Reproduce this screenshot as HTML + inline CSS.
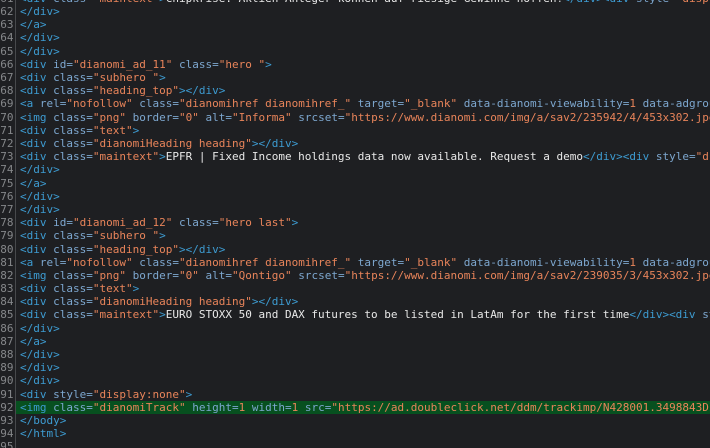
<!DOCTYPE html>
<html lang="en">
<head>
<meta charset="utf-8">
<title>Source view</title>
<style>
html,body{margin:0;padding:0;background:#1e1f22;width:710px;height:448px;overflow:hidden}
#w{position:relative;width:710px;height:448px;overflow:hidden;background:#1e1f22;font:11px/13.19px "DejaVu Sans Mono",monospace;filter:blur(.3px)}
#sep{position:absolute;left:15px;top:0;width:1px;height:448px;background:#47494c}
#hl{position:absolute;left:16px;right:-2px;top:401px;height:13px;background:#07501f}
.l{position:absolute;left:0;height:13.19px;width:710px;white-space:pre}
.g{position:absolute;right:696.5px;top:0;color:#85878a}
.c{position:absolute;left:20px;top:0}
i{font-style:normal}
.t{color:#3d9bd1}.a{color:#7da7cf}.s{color:#e8845a}.n{color:#e8845a}.x{color:#e8e8e8}
</style>
</head>
<body>
<div id="w">
<div id="sep"></div>
<div id="hl"></div>
<div class="l" style="top:-8.2px"><span class="g">61</span><span class="c"><i class="t">&lt;div</i> <i class="a">class=</i><i class="s">"maintext"</i><i class="t">&gt;</i><i class="x">Chipkrise: Aktien-Anleger können auf riesige Gewinne hoffen!</i><i class="t">&lt;/div&gt;&lt;div</i> <i class="a">style=</i><i class="s">"display</i></span></div>
<div class="l" style="top:5px"><span class="g">62</span><span class="c t">&lt;/div&gt;</span></div>
<div class="l" style="top:18.2px"><span class="g">63</span><span class="c t">&lt;/a&gt;</span></div>
<div class="l" style="top:31.4px"><span class="g">64</span><span class="c t">&lt;/div&gt;</span></div>
<div class="l" style="top:44.6px"><span class="g">65</span><span class="c t">&lt;/div&gt;</span></div>
<div class="l" style="top:57.8px"><span class="g">66</span><span class="c"><i class="t">&lt;div</i> <i class="a">id=</i><i class="s">"dianomi_ad_11"</i> <i class="a">class=</i><i class="s">"hero "</i><i class="t">&gt;</i></span></div>
<div class="l" style="top:71px"><span class="g">67</span><span class="c"><i class="t">&lt;div</i> <i class="a">class=</i><i class="s">"subhero "</i><i class="t">&gt;</i></span></div>
<div class="l" style="top:84.1px"><span class="g">68</span><span class="c"><i class="t">&lt;div</i> <i class="a">class=</i><i class="s">"heading_top"</i><i class="t">&gt;&lt;/div&gt;</i></span></div>
<div class="l" style="top:97.3px"><span class="g">69</span><span class="c"><i class="t">&lt;a</i> <i class="a">rel=</i><i class="s">"nofollow"</i> <i class="a">class=</i><i class="s">"dianomihref dianomihref_"</i> <i class="a">target=</i><i class="s">"_blank"</i> <i class="a">data-dianomi-viewability=</i><i class="n">1</i> <i class="a">data-adgroup</i></span></div>
<div class="l" style="top:110.5px"><span class="g">70</span><span class="c"><i class="t">&lt;img</i> <i class="a">class=</i><i class="s">"png"</i> <i class="a">border=</i><i class="s">"0"</i> <i class="a">alt=</i><i class="s">"Informa"</i> <i class="a">srcset=</i><i class="s">"https://www.dianomi.com/img/a/sav2/235942/4/453x302.jpg</i></span></div>
<div class="l" style="top:123.7px"><span class="g">71</span><span class="c"><i class="t">&lt;div</i> <i class="a">class=</i><i class="s">"text"</i><i class="t">&gt;</i></span></div>
<div class="l" style="top:136.9px"><span class="g">72</span><span class="c"><i class="t">&lt;div</i> <i class="a">class=</i><i class="s">"dianomiHeading heading"</i><i class="t">&gt;&lt;/div&gt;</i></span></div>
<div class="l" style="top:150.1px"><span class="g">73</span><span class="c"><i class="t">&lt;div</i> <i class="a">class=</i><i class="s">"maintext"</i><i class="t">&gt;</i><i class="x">EPFR | Fixed Income holdings data now available. Request a demo</i><i class="t">&lt;/div&gt;&lt;div</i> <i class="a">style=</i><i class="s">"d</i></span></div>
<div class="l" style="top:163.3px"><span class="g">74</span><span class="c t">&lt;/div&gt;</span></div>
<div class="l" style="top:176.5px"><span class="g">75</span><span class="c t">&lt;/a&gt;</span></div>
<div class="l" style="top:189.7px"><span class="g">76</span><span class="c t">&lt;/div&gt;</span></div>
<div class="l" style="top:202.9px"><span class="g">77</span><span class="c t">&lt;/div&gt;</span></div>
<div class="l" style="top:216.1px"><span class="g">78</span><span class="c"><i class="t">&lt;div</i> <i class="a">id=</i><i class="s">"dianomi_ad_12"</i> <i class="a">class=</i><i class="s">"hero last"</i><i class="t">&gt;</i></span></div>
<div class="l" style="top:229.3px"><span class="g">79</span><span class="c"><i class="t">&lt;div</i> <i class="a">class=</i><i class="s">"subhero "</i><i class="t">&gt;</i></span></div>
<div class="l" style="top:242.5px"><span class="g">80</span><span class="c"><i class="t">&lt;div</i> <i class="a">class=</i><i class="s">"heading_top"</i><i class="t">&gt;&lt;/div&gt;</i></span></div>
<div class="l" style="top:255.7px"><span class="g">81</span><span class="c"><i class="t">&lt;a</i> <i class="a">rel=</i><i class="s">"nofollow"</i> <i class="a">class=</i><i class="s">"dianomihref dianomihref_"</i> <i class="a">target=</i><i class="s">"_blank"</i> <i class="a">data-dianomi-viewability=</i><i class="n">1</i> <i class="a">data-adgroup</i></span></div>
<div class="l" style="top:268.9px"><span class="g">82</span><span class="c"><i class="t">&lt;img</i> <i class="a">class=</i><i class="s">"png"</i> <i class="a">border=</i><i class="s">"0"</i> <i class="a">alt=</i><i class="s">"Qontigo"</i> <i class="a">srcset=</i><i class="s">"https://www.dianomi.com/img/a/sav2/239035/3/453x302.jpg</i></span></div>
<div class="l" style="top:282px"><span class="g">83</span><span class="c"><i class="t">&lt;div</i> <i class="a">class=</i><i class="s">"text"</i><i class="t">&gt;</i></span></div>
<div class="l" style="top:295.2px"><span class="g">84</span><span class="c"><i class="t">&lt;div</i> <i class="a">class=</i><i class="s">"dianomiHeading heading"</i><i class="t">&gt;&lt;/div&gt;</i></span></div>
<div class="l" style="top:308.4px"><span class="g">85</span><span class="c"><i class="t">&lt;div</i> <i class="a">class=</i><i class="s">"maintext"</i><i class="t">&gt;</i><i class="x">EURO STOXX 50 and DAX futures to be listed in LatAm for the first time</i><i class="t">&lt;/div&gt;&lt;div</i> <i class="a">st</i></span></div>
<div class="l" style="top:321.6px"><span class="g">86</span><span class="c t">&lt;/div&gt;</span></div>
<div class="l" style="top:334.8px"><span class="g">87</span><span class="c t">&lt;/a&gt;</span></div>
<div class="l" style="top:348px"><span class="g">88</span><span class="c t">&lt;/div&gt;</span></div>
<div class="l" style="top:361.2px"><span class="g">89</span><span class="c t">&lt;/div&gt;</span></div>
<div class="l" style="top:374.4px"><span class="g">90</span><span class="c t">&lt;/div&gt;</span></div>
<div class="l" style="top:387.6px"><span class="g">91</span><span class="c"><i class="t">&lt;div</i> <i class="a">style=</i><i class="s">"display:none"</i><i class="t">&gt;</i></span></div>
<div class="l" style="top:400.8px"><span class="g">92</span><span class="c"><i class="t">&lt;img</i> <i class="a">class=</i><i class="s">"dianomiTrack"</i> <i class="a">height=</i><i class="n">1</i> <i class="a">width=</i><i class="n">1</i> <i class="a">src=</i><i class="s">"https://ad.doubleclick.net/ddm/trackimp/N428001.3498843DI</i></span></div>
<div class="l" style="top:414px"><span class="g">93</span><span class="c t">&lt;/body&gt;</span></div>
<div class="l" style="top:427.2px"><span class="g">94</span><span class="c t">&lt;/html&gt;</span></div>
<div class="l" style="top:440.4px"><span class="g">95</span></div>
</div>
</body>
</html>
